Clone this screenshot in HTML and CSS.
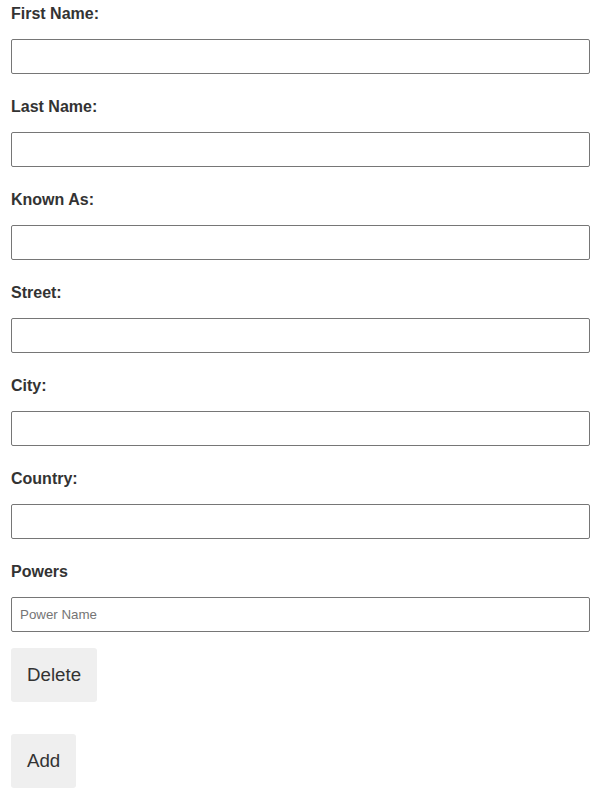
FILE: index.html
```html
<!DOCTYPE html>
<html>
<head>
<meta charset="utf-8">
<link rel="stylesheet" href="styles.css">
</head>
<body>
<form class="form">
  <div class="field"><label class="label">First Name:</label><input class="input" type="text"></div>
  <div class="field"><label class="label">Last Name:</label><input class="input" type="text"></div>
  <div class="field"><label class="label">Known As:</label><input class="input" type="text"></div>
  <div class="field"><label class="label">Street:</label><input class="input" type="text"></div>
  <div class="field"><label class="label">City:</label><input class="input" type="text"></div>
  <div class="field"><label class="label">Country:</label><input class="input" type="text"></div>
  <div class="field powers"><label class="label">Powers</label><input class="input small" type="text" placeholder="Power Name"></div>
  <div class="actions">
    <button type="button" class="btn">Delete</button>
    <button type="button" class="btn add">Add</button>
  </div>
</form>
</body>
</html>
```
FILE: styles.css
```css
html, body {
  margin: 0;
  padding: 0;
  background: #fff;
}
body {
  font-family: "Liberation Sans", Arial, sans-serif;
  color: #333;
}
.form {
  padding: 0 11px;
}
.field {
  display: flex;
  flex-direction: column;
  padding-top: 4px;
}
.label {
  display: block;
  font-size: 16px;
  font-weight: bold;
  line-height: 19px;
  margin-bottom: 16px;
  color: #333;
}
.input {
  box-sizing: border-box;
  width: 100%;
  height: 35px;
  margin: 0 0 19px 0;
  border: 1px solid #767676;
  border-radius: 2px;
  padding: 0 8px;
  font-family: "Liberation Sans", Arial, sans-serif;
  font-size: 13.33px;
  color: #333;
  background: #fff;
}
.input::placeholder {
  color: #757575;
}
.powers .input {
  margin-bottom: 16px;
}
.actions {
  display: flex;
  flex-direction: column;
  align-items: flex-start;
  gap: 32px;
}
.btn {
  height: 54px;
  padding: 0 16px;
  border: none;
  border-radius: 3px;
  background: #efefef;
  font-family: "Liberation Sans", Arial, sans-serif;
  font-size: 18.7px;
  color: #333;
  cursor: pointer;
}
```
